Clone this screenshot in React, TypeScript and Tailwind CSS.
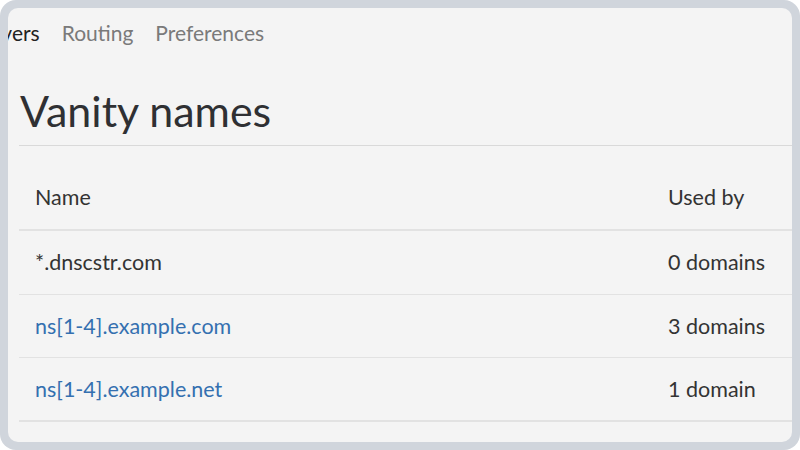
const rows = [
  { name: "*.dnscstr.com", link: false, used: "0 domains", h: "h-[64px]", b: "border-b" },
  { name: "ns[1-4].example.com", link: true, used: "3 domains", h: "h-[63px]", b: "border-b" },
  { name: "ns[1-4].example.net", link: true, used: "1 domain", h: "h-[64px]", b: "border-b-2" },
];

export default function App() {
  return (
    <div className="w-[800px] h-[450px] bg-white font-['Lato',sans-serif]">
      <div className="w-full h-full rounded-[16px] bg-[#d0d5dc] p-2">
        <div className="w-full h-full rounded-[10px] bg-[#f4f4f4] overflow-hidden">
          {/* tabs, scrolled so the first one is cut off */}
          <div className="h-[50px] flex items-center gap-[22px] ml-[-89px] text-[21px] whitespace-nowrap">
            <span className="text-[#222]">Nameservers</span>
            <span className="text-[#7a7a7a]">Routing</span>
            <span className="text-[#7a7a7a]">Preferences</span>
          </div>

          <div className="ml-[11px]">
            <div className="h-[88px] flex items-end border-b border-[#d9d9d9]">
              <h1 className="pl-px pb-[6px] text-[43px] leading-[56px] text-[#2f3033]">Vanity names</h1>
            </div>

            <div className="w-[900px] text-[21.5px] text-[#333]">
              <div className="h-[85px] flex items-end pb-[18px] border-b-2 border-[#e2e2e2]">
                <div className="w-[633px] pl-[16px] leading-[28px]">Name</div>
                <div className="pl-[16px] leading-[28px]">Used by</div>
              </div>
              {rows.map((r) => (
                <div key={r.name} className={`${r.h} ${r.b} flex items-center border-[#e2e2e2]`}>
                  <div className={`w-[633px] pl-[16px] ${r.link ? "text-[#3470b0]" : ""}`}>{r.name}</div>
                  <div className="pl-[16px]">{r.used}</div>
                </div>
              ))}
            </div>
          </div>
        </div>
      </div>
    </div>
  );
}
